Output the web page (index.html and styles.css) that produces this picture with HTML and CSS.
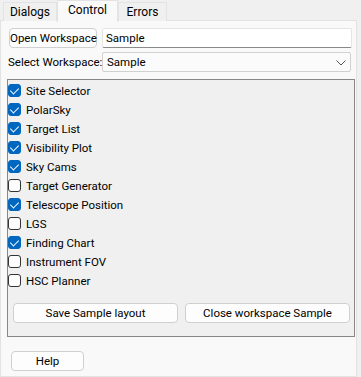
FILE: index.html
```html
<!DOCTYPE html>
<html>
<head>
<meta charset="utf-8">
<link rel="stylesheet" href="styles.css">
</head>
<body>
<div class="tabs">
  <div class="tab">Dialogs</div>
  <div class="tab active">Control</div>
  <div class="tab">Errors</div>
</div>
<div class="pane">
  <div class="row">
    <button class="btn open">Open Workspace</button>
    <div class="input">Sample</div>
  </div>
  <div class="row row2">
    <span class="label">Select Workspace:</span>
    <div class="combo">Sample
      <svg class="chev" width="10" height="6" viewBox="0 0 10 6"><path d="M0.5 0.5 L5 5 L9.5 0.5" fill="none" stroke="#555" stroke-width="1"/></svg>
    </div>
  </div>
  <div class="group">
    <ul class="checks">
      <li><span class="cb on"></span>Site Selector</li>
      <li><span class="cb on"></span>PolarSky</li>
      <li><span class="cb on"></span>Target List</li>
      <li><span class="cb on"></span>Visibility Plot</li>
      <li><span class="cb on"></span>Sky Cams</li>
      <li><span class="cb"></span>Target Generator</li>
      <li><span class="cb on"></span>Telescope Position</li>
      <li><span class="cb"></span>LGS</li>
      <li><span class="cb on"></span>Finding Chart</li>
      <li><span class="cb"></span>Instrument FOV</li>
      <li><span class="cb"></span>HSC Planner</li>
    </ul>
    <div class="actions">
      <button class="btn wide">Save Sample layout</button>
      <button class="btn wide">Close workspace Sample</button>
    </div>
  </div>
  <button class="btn help">Help</button>
</div>
</body>
</html>
```

FILE: styles.css
```css
* { box-sizing: border-box; }
html, body {
  margin: 0;
  padding: 0;
  background: #f0f0f0;
  font-family: Roboto, "Liberation Sans", sans-serif;
  font-size: 11.5px;
  color: #000;
  width: 361px;
  height: 377px;
  overflow: hidden;
  white-space: nowrap;
}
.tabs {
  display: flex;
  height: 21px;
  padding-left: 3px;
  align-items: flex-end;
  position: relative;
  z-index: 1;
}
.tab {
  height: 19px;
  padding: 0;
  text-align: center;
  line-height: 18px;
  background: #f0f0f0;
  border: 1px solid #e3e3e3;
  border-bottom: none;
  font-size: 12px;
}
.tab:first-child { width: 54px; }
.tab.active {
  height: 22px;
  width: 61px;
  background: #f9f9f9;
  margin-bottom: -1px;
  line-height: 19px;
  border-color: #e3e3e3;
}
.tab:last-child { width: 49px; }
.pane {
  width: 357px;
  height: 357px;
  margin-top: -1px;
  background: #f9f9f9;
  border: 1px solid #e3e3e3;
  padding: 7px 0 0 8px;
}
.row {
  display: flex;
  align-items: center;
  height: 20px;
}
.row2 { margin-top: 4px; }
.btn {
  font: inherit;
  color: #000;
  background: #fdfdfd;
  border: 1px solid #d0d0d0;
  border-radius: 4px;
  height: 20px;
  padding: 0;
  white-space: nowrap;
}
.open { width: 88px; }
.input {
  margin-left: 5px;
  width: 250px;
  height: 20px;
  background: #fff;
  border: 1px solid #e5e5e5;
  border-bottom: 1px solid #8a8a8a;
  border-radius: 2px;
  padding: 0 0 0 3px;
  line-height: 18px;
}
.label { width: 94px; margin-left: -1px; }
.combo {
  position: relative;
  width: 249px;
  height: 20px;
  background: #fbfbfb;
  border: 1px solid #d0d0d0;
  border-radius: 2px;
  padding-left: 4px;
  line-height: 18px;
}
.chev { position: absolute; right: 4px; top: 7px; }
.group {
  margin: 7px 0 0 -2px;
  width: 348px;
  height: 258px;
  background: #f0f0f0;
  border: 1px solid #878787;
  padding-top: 1px;
}
.checks {
  list-style: none;
  margin: 0;
  padding: 0;
}
.checks li {
  display: flex;
  align-items: center;
  height: 19px;
}
.cb {
  width: 13px;
  height: 13px;
  border: 1px solid #333;
  border-radius: 3px;
  background: #fdfdfd;
  margin-right: 5px;
  position: relative;
}
.cb.on {
  background: #0067c0;
  border-color: #0067c0;
}
.cb.on::after {
  content: "";
  position: absolute;
  left: 3px;
  top: 1px;
  width: 4px;
  height: 7px;
  border-right: 1px solid #fff;
  border-bottom: 1px solid #fff;
  transform: rotate(45deg);
}
.actions {
  display: flex;
  gap: 7px;
  padding-left: 5px;
  margin-top: 13px;
}
.wide { width: 165px; }
.help {
  width: 73px;
  margin: 14px 0 0 2px;
}
```
